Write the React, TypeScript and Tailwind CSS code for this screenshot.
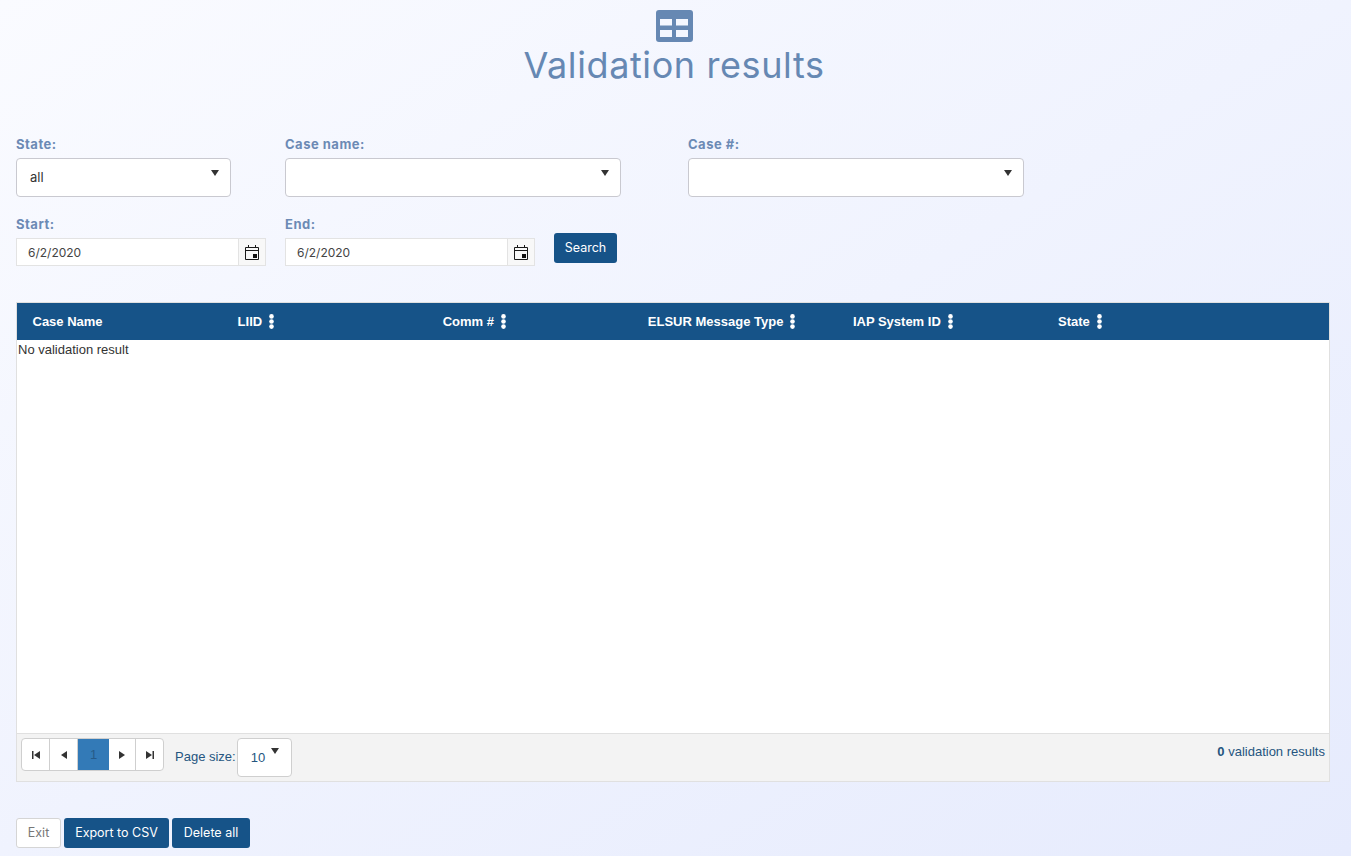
import React from 'react';

const heading = "font-['Inter','Noto_Sans',sans-serif]";

const Caret = ({ className = '' }: { className?: string }) => (
  <svg width="8" height="6" viewBox="0 0 8 6" className={className}>
    <path d="M0 0h8L4 6z" fill="#333" />
  </svg>
);

const Dots = () => (
  <svg width="5" height="15" viewBox="0 0 5 15" className="ml-[7px]">
    <circle cx="2.5" cy="2.4" r="2.3" fill="#fff" />
    <circle cx="2.5" cy="7.5" r="2.3" fill="#fff" />
    <circle cx="2.5" cy="12.6" r="2.3" fill="#fff" />
  </svg>
);

const CalendarIcon = () => (
  <svg width="14" height="15" viewBox="0 0 14 15">
    <path d="M.5 2.500h13v12H.5z" fill="none" stroke="#1a1a1a" />
    <path d="M1 5h12v1H1z" fill="#1a1a1a" />
    <path d="M3 0h1v3H3zM10 0h1v3h-1z" fill="#1a1a1a" />
    <path d="M8 9h4v4H8z" fill="#111" />
  </svg>
);

const Select = ({ label, value, width, mr }: { label: string; value?: string; width: string; mr: string }) => (
  <div className={`${width} ${mr}`}>
    <div className="h-[24px] text-[13px] leading-[21px] font-bold tracking-[0.5px] text-[#6c8ab5]">{label}</div>
    <div className="flex h-[39px] items-start justify-between rounded-[4px] border border-[#c9c9d0] bg-white pl-[13px] pr-[11px]">
      <span className="mt-[9px] text-[13px] leading-[18px] text-[#333]">{value}</span>
      <Caret className="mt-[11px]" />
    </div>
  </div>
);

const DateField = ({ label, mr }: { label: string; mr: string }) => (
  <div className={`w-[250px] ${mr}`}>
    <div className="h-[24px] text-[13px] leading-[21px] font-bold tracking-[0.5px] text-[#6c8ab5]">{label}</div>
    <div className="flex h-[28px] border border-[#e3e3e3] bg-white">
      <span className="flex-1 pl-[11px] text-[12px] leading-[27px] text-[#444]">6/2/2020</span>
      <span className="flex w-[27px] items-center justify-center border-l border-[#e3e3e3] bg-[#f8f8f8]">
        <CalendarIcon />
      </span>
    </div>
  </div>
);

const columns = [
  { name: 'Case Name', dots: false },
  { name: 'LIID', dots: true },
  { name: 'Comm #', dots: true },
  { name: 'ELSUR Message Type', dots: true },
  { name: 'IAP System ID', dots: true },
  { name: 'State', dots: true },
];

const PagerBtn = ({ children, width, last }: { children: React.ReactNode; width: string; last?: boolean }) => (
  <span className={`flex h-full shrink-0 items-center justify-center ${width} ${last ? '' : 'border-r border-[#cfcfcf]'}`}>
    {children}
  </span>
);

export default function App() {
  return (
    <div className={`h-[856px] overflow-hidden bg-gradient-to-br from-[#fafbff] to-[#e6ebfd] px-4 ${heading}`}>
      <div className="flex flex-col items-center pr-[3px] pt-[10px]">
        <svg width="37" height="32" viewBox="0 0 37 32">
          <rect width="37" height="32" rx="3" fill="#6688b3" />
          <path d="M4 9h12v6.500H4zM20 9h12v6.500H20zM4 20h12v7H4zM20 20h12v7H20z" fill="#f4f7ff" />
        </svg>
        <h1 className="mt-[2px] text-[36px] leading-[42px] font-normal tracking-[0.6px] text-[#6688b3]">Validation results</h1>
      </div>

      <div className="mt-[48px] flex">
        <Select label="State:" value="all" width="w-[215px]" mr="mr-[54px]" />
        <Select label="Case name:" width="w-[336px]" mr="mr-[67px]" />
        <Select label="Case #:" width="w-[336px]" mr="" />
      </div>

      <div className="mt-[17px] flex items-start">
        <DateField label="Start:" mr="mr-[19px]" />
        <DateField label="End:" mr="mr-[19px]" />
        <button className="mt-[19px] h-[30px] w-[63px] rounded-[3px] bg-[#165388] text-[12.500px] text-white">Search</button>
      </div>

      <div className="mt-[36px] flex h-[480px] w-[1314px] flex-col border border-[#e0e0e0] bg-white font-['Liberation_Sans',sans-serif] text-[13px]">
        <div className="flex h-[37px] shrink-0 items-center bg-[#165388] pl-[15.500px] font-bold text-white">
          {columns.map((col) => (
            <div key={col.name} className="flex w-[205.100px] items-center">
              {col.name}
              {col.dots && <Dots />}
            </div>
          ))}
        </div>
        <div className="flex-1 pl-px pt-[2px] leading-[16px] text-[#333]">No validation result</div>
        <div className="flex h-[48px] shrink-0 items-start justify-between border-t border-[#e0e0e0] bg-[#f3f3f3] pl-[4px] pr-[4px] pt-[4px]">
          <div className="flex items-start">
            <div className="flex h-[33px] w-[143px] overflow-hidden rounded-[4px] border border-[#cfcfcf] bg-white">
              <PagerBtn width="w-[28px]">
                <svg width="8" height="8" viewBox="0 0 8 8"><path d="M0 0h1.500v8H0zM8 0v8L2 4z" fill="#333" /></svg>
              </PagerBtn>
              <PagerBtn width="w-[28px]">
                <svg width="6" height="8" viewBox="0 0 6 8"><path d="M6 0v8L0 4z" fill="#333" /></svg>
              </PagerBtn>
              <span className="flex h-full w-[31px] shrink-0 items-center justify-center bg-[#337ab7] text-[#265a88]">1</span>
              <PagerBtn width="w-[27px]">
                <svg width="6" height="8" viewBox="0 0 6 8"><path d="M0 0v8l6-4z" fill="#333" /></svg>
              </PagerBtn>
              <PagerBtn width="w-[27px]" last>
                <svg width="8" height="8" viewBox="0 0 8 8"><path d="M0 0v8l6-4zM6.500 0H8v8H6.500z" fill="#333" /></svg>
              </PagerBtn>
            </div>
            <span className="ml-[11px] mt-[11px] leading-[16px] text-[#25557f]">Page size:</span>
            <div className="ml-px flex h-[39px] w-[55px] items-start rounded-[4px] border border-[#cfcfcf] bg-white pl-[13px]">
              <span className="mt-[11px] leading-[16px] text-[#25557f]">10</span>
              <Caret className="ml-[6px] mt-[9px]" />
            </div>
          </div>
          <div className="mt-[6px] leading-[16px] text-[#25557f]"><b>0</b> validation results</div>
        </div>
      </div>

      <div className="mt-[36px] flex gap-[3px] text-[12.500px]">
        <button className="h-[30px] w-[45px] rounded-[3px] border border-[#d5d5d5] bg-white text-[#777]">Exit</button>
        <button className="h-[30px] w-[105px] rounded-[3px] bg-[#165388] text-white">Export to CSV</button>
        <button className="h-[30px] w-[78px] rounded-[3px] bg-[#165388] text-white">Delete all</button>
      </div>
    </div>
  );
}
